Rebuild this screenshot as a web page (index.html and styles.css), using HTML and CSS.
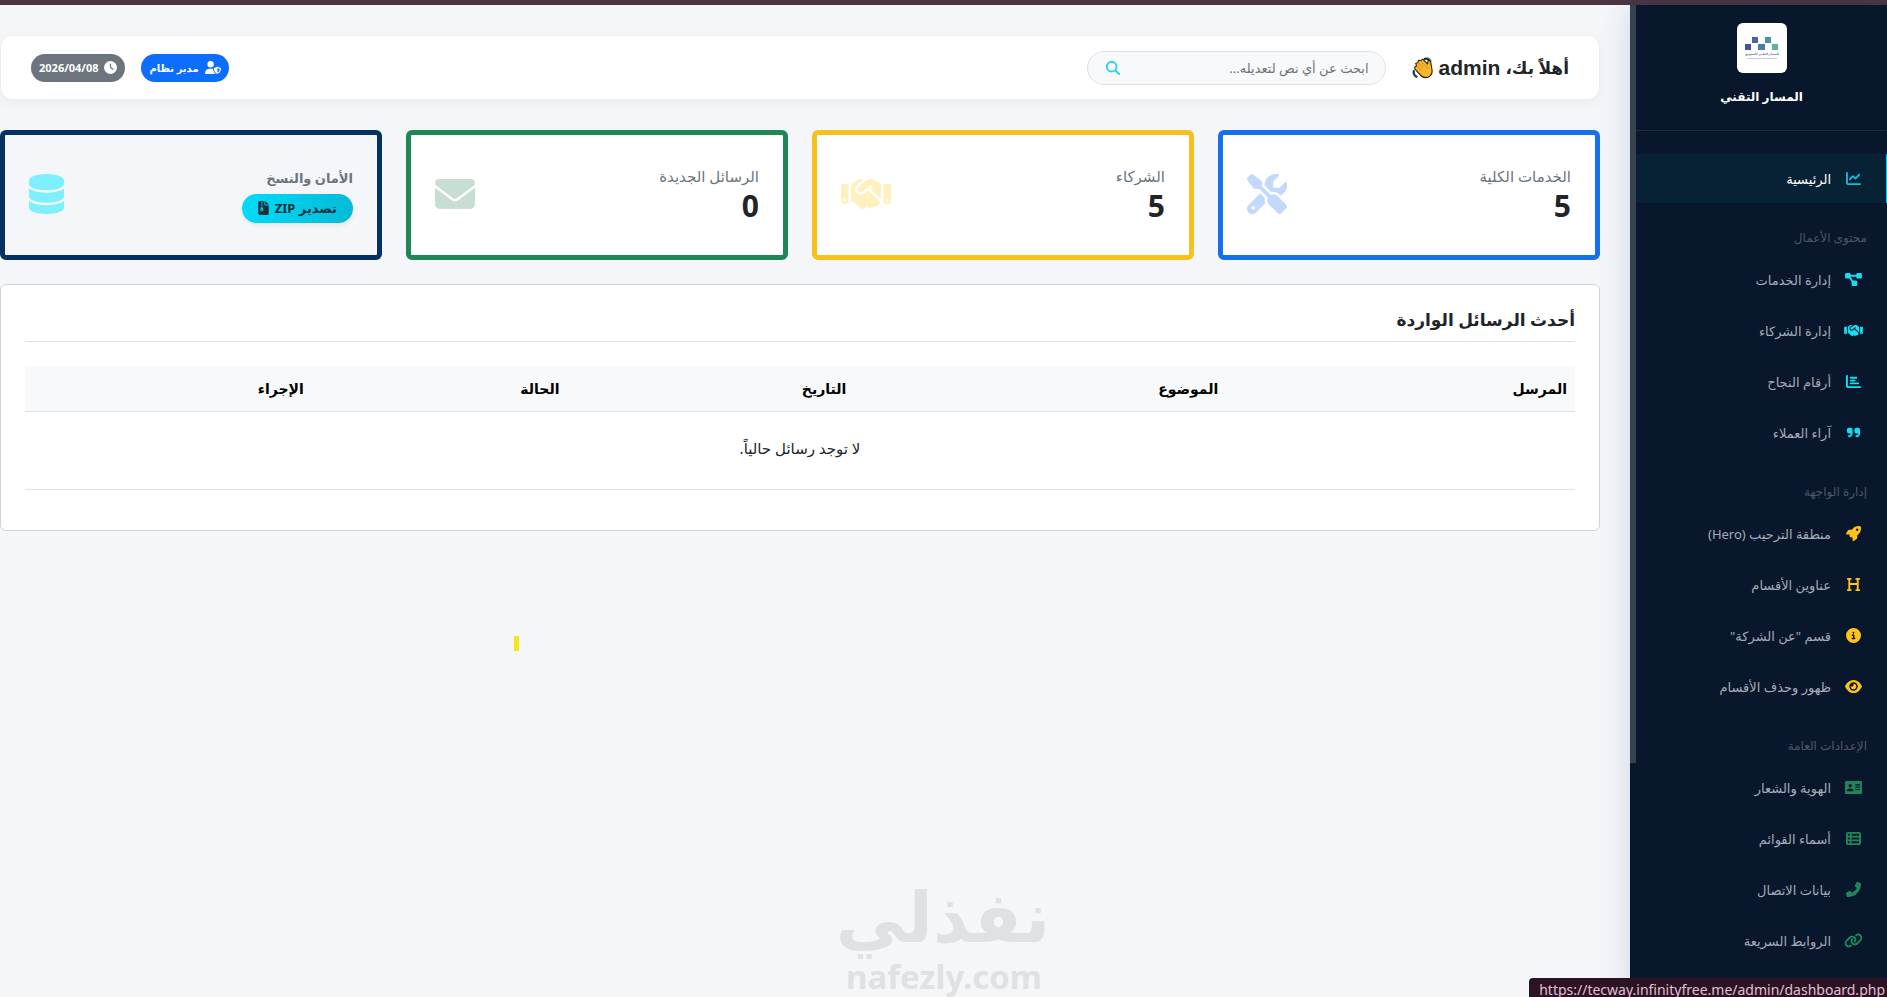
FILE: index.html
```html
<!DOCTYPE html>
<html lang="ar" dir="rtl">
<head>
  <meta charset="UTF-8">
  <meta name="viewport" content="width=device-width, initial-scale=1.0">
  <title>لوحة التحكم</title>
  <link rel="stylesheet" href="styles.css">
</head>
<body>
  <div class="top-strip"></div>

  <div class="layout">
    <aside class="sidebar">
      <div class="scroll-thumb"></div>

      <div class="brand">
        <div class="brand-logo">
          <svg viewBox="0 0 50 50">
            <rect x="8" y="21" width="6" height="6" fill="#4a4f9f"/>
            <rect x="15" y="14" width="6" height="6" fill="#4e62a6"/>
            <rect x="21" y="21" width="7" height="6" fill="#457fa8"/>
            <rect x="28" y="14" width="6" height="6" fill="#4795a5"/>
            <rect x="35" y="21" width="6" height="6" fill="#58b5a6"/>
            <text x="25" y="32" class="logo-text">المسار التقني للتسويق</text>
            <text x="25" y="36" class="logo-sub">Technical Track for Marketing</text>
          </svg>
        </div>
        <div class="brand-name">المسار التقني</div>
      </div>

      <nav class="nav">
        <a href="#" class="nav-link active">
          <svg class="icon" viewBox="0 0 512 512"><path d="M64 64c0-17.7-14.3-32-32-32S0 46.3 0 64V400c0 44.2 35.8 80 80 80H480c17.7 0 32-14.3 32-32s-14.3-32-32-32H80c-8.8 0-16-7.2-16-16V64zm406.6 86.6c12.5-12.5 12.5-32.8 0-45.3s-32.8-12.5-45.3 0L320 210.7l-57.4-57.4c-12.5-12.5-32.8-12.5-45.3 0l-112 112c-12.5 12.5-12.5 32.8 0 45.3s32.8 12.5 45.3 0L240 221.3l57.4 57.4c12.5 12.5 32.8 12.5 45.3 0l128-128z"/></svg>
          <span>الرئيسية</span>
        </a>

        <div class="nav-title">محتوى الأعمال</div>
        <a href="#" class="nav-link cyan">
          <svg class="icon" viewBox="0 0 576 512"><path d="M0 80C0 53.5 21.5 32 48 32h96c26.5 0 48 21.5 48 48V96H384V80c0-26.5 21.5-48 48-48h96c26.5 0 48 21.5 48 48v96c0 26.5-21.5 48-48 48H432c-26.5 0-48-21.5-48-48V160H192v16c0 1.7-.1 3.4-.3 5L272 288h96c26.5 0 48 21.5 48 48v96c0 26.5-21.5 48-48 48H272c-26.5 0-48-21.5-48-48V336c0-1.7 .1-3.4 .3-5L144 224H48c-26.5 0-48-21.5-48-48V80z"/></svg>
          <span>إدارة الخدمات</span>
        </a>
        <a href="#" class="nav-link cyan">
          <svg class="icon" viewBox="0 0 640 512"><path d="M323.4 85.2l-96.8 78.4c-16.1 13-19.2 36.4-7 53.1c12.9 17.8 38 21.3 55.3 7.8l99.3-77.2c7-5.4 17-4.2 22.5 2.8s4.2 17-2.8 22.5l-20.9 16.2L512 316.8V128h-.7l-3.9-2.5L434.8 79c-15.3-9.8-33.2-15-51.4-15c-21.8 0-43 7.5-60 21.2zm22.8 124.4l-51.7 40.2C263 274.3 217.3 268 193.7 235.6c-22.2-30.5-16.6-73.1 12.7-96.8l83.2-67.3c-11.6-4.9-24.1-7.4-36.8-7.4C234 64 215.7 69.6 200 80l-72 48V352h28.2l91.4 83.4c19.6 17.9 49.9 16.5 67.8-3.1c5.5-6.1 9.2-13.2 11.1-20.6l17 15.6c19.5 17.9 49.9 16.6 67.8-2.9c4.5-4.9 7.8-10.6 9.9-16.5c19.4 13 45.8 10.3 62.1-7.5c17.9-19.5 16.6-49.9-2.9-67.8l-134.2-123zM16 128c-8.8 0-16 7.2-16 16V352c0 17.7 14.3 32 32 32H64c17.7 0 32-14.3 32-32V128H16zM48 320a16 16 0 1 1 0 32 16 16 0 1 1 0-32zM544 128V352c0 17.7 14.3 32 32 32h32c17.7 0 32-14.3 32-32V144c0-8.8-7.2-16-16-16H544zm32 208a16 16 0 1 1 32 0 16 16 0 1 1 -32 0z"/></svg>
          <span>إدارة الشركاء</span>
        </a>
        <a href="#" class="nav-link cyan">
          <svg class="icon" viewBox="0 0 512 512"><path d="M32 32c17.7 0 32 14.3 32 32V400c0 8.8 7.2 16 16 16H480c17.7 0 32 14.3 32 32s-14.3 32-32 32H80c-44.2 0-80-35.8-80-80V64C0 46.3 14.3 32 32 32zm96 96c0-17.7 14.3-32 32-32l192 0c17.7 0 32 14.3 32 32s-14.3 32-32 32H160c-17.7 0-32-14.3-32-32zm32 64H288c17.7 0 32 14.3 32 32s-14.3 32-32 32H160c-17.7 0-32-14.3-32-32s14.3-32 32-32zm0 96H416c17.7 0 32 14.3 32 32s-14.3 32-32 32H160c-17.7 0-32-14.3-32-32s14.3-32 32-32z"/></svg>
          <span>أرقام النجاح</span>
        </a>
        <a href="#" class="nav-link cyan">
          <svg class="icon" viewBox="0 0 448 512"><path d="M448 296c0 66.3-53.7 120-120 120h-8c-17.7 0-32-14.3-32-32s14.3-32 32-32h8c30.9 0 56-25.1 56-56v-8H320c-35.3 0-64-28.7-64-64V160c0-35.3 28.7-64 64-64h64c35.3 0 64 28.7 64 64v32 32 72zm-256 0c0 66.3-53.7 120-120 120H64c-17.7 0-32-14.3-32-32s14.3-32 32-32h8c30.9 0 56-25.1 56-56v-8H64c-35.3 0-64-28.7-64-64V160c0-35.3 28.7-64 64-64h64c35.3 0 64 28.7 64 64v32 32 72z"/></svg>
          <span>آراء العملاء</span>
        </a>

        <div class="nav-title">إدارة الواجهة</div>
        <a href="#" class="nav-link yellow">
          <svg class="icon" viewBox="0 0 512 512"><path d="M156.6 384.9L125.7 354c-8.5-8.5-11.5-20.8-7.7-32.2c3-8.9 7-20.5 11.8-33.8L24 288c-8.6 0-16.6-4.6-20.9-12.1s-4.2-16.7 .2-24.1l52.5-88.5c13-21.9 36.5-35.3 61.9-35.3l82.3 0c2.4-4 4.8-7.7 7.2-11.3C289.1-4.1 411.1-8.1 483.9 5.3c11.6 2.1 20.6 11.2 22.8 22.8c13.4 72.9 9.3 194.8-111.4 276.7c-3.5 2.4-7.3 4.8-11.3 7.2v82.3c0 25.4-13.4 49-35.3 61.9l-88.5 52.5c-7.4 4.4-16.6 4.5-24.1 .2s-12.1-12.2-12.1-20.9V380.8c-14.1 4.9-26.4 8.9-35.7 11.9c-11.2 3.6-23.4 .5-31.8-7.8zM384 168a40 40 0 1 0 0-80 40 40 0 1 0 0 80z"/></svg>
          <span>منطقة الترحيب (Hero)</span>
        </a>
        <a href="#" class="nav-link yellow">
          <svg class="icon" viewBox="0 0 448 512"><path d="M0 64C0 46.3 14.3 32 32 32H80h48c17.7 0 32 14.3 32 32s-14.3 32-32 32H112V208H336V96H320c-17.7 0-32-14.3-32-32s14.3-32 32-32h48 48c17.7 0 32 14.3 32 32s-14.3 32-32 32H400V240 416h16c17.7 0 32 14.3 32 32s-14.3 32-32 32H368 320c-17.7 0-32-14.3-32-32s14.3-32 32-32h16V272H112V416h16c17.7 0 32 14.3 32 32s-14.3 32-32 32H80 32c-17.7 0-32-14.3-32-32s14.3-32 32-32H48V240 96H32C14.3 96 0 81.7 0 64z"/></svg>
          <span>عناوين الأقسام</span>
        </a>
        <a href="#" class="nav-link yellow">
          <svg class="icon" viewBox="0 0 512 512"><path d="M256 512A256 256 0 1 0 256 0a256 256 0 1 0 0 512zM216 336h24V272H216c-13.3 0-24-10.7-24-24s10.7-24 24-24h48c13.3 0 24 10.7 24 24v88h8c13.3 0 24 10.7 24 24s-10.7 24-24 24H216c-13.3 0-24-10.7-24-24s10.7-24 24-24zm40-208a32 32 0 1 1 0 64 32 32 0 1 1 0-64z"/></svg>
          <span>قسم "عن الشركة"</span>
        </a>
        <a href="#" class="nav-link yellow">
          <svg class="icon" viewBox="0 0 576 512"><path d="M288 32c-80.8 0-145.5 36.8-192.6 80.6C48.6 156 17.3 208 2.5 243.7c-3.3 7.9-3.3 16.7 0 24.6C17.3 304 48.6 356 95.4 399.4C142.5 443.2 207.2 480 288 480s145.5-36.8 192.6-80.6c46.8-43.5 78.1-95.4 93-131.1c3.3-7.9 3.3-16.7 0-24.6c-14.9-35.7-46.2-87.7-93-131.1C433.5 68.8 368.8 32 288 32zM144 256a144 144 0 1 1 288 0 144 144 0 1 1 -288 0zm144-64c0 35.3-28.7 64-64 64c-7.1 0-13.9-1.2-20.3-3.3c-5.5-1.8-11.9 1.6-11.7 7.4c.3 6.9 1.3 13.8 3.2 20.7c13.7 51.2 66.4 81.6 117.6 67.9s81.6-66.4 67.9-117.6c-11.1-41.5-47.8-69.4-88.6-71.1c-5.8-.2-9.2 6.1-7.4 11.7c2.1 6.4 3.3 13.2 3.3 20.3z"/></svg>
          <span>ظهور وحذف الأقسام</span>
        </a>

        <div class="nav-title">الإعدادات العامة</div>
        <a href="#" class="nav-link green">
          <svg class="icon" viewBox="0 0 576 512"><path fill-rule="evenodd" d="M0 64a32 32 0 0 1 32-32H544a32 32 0 0 1 32 32V448a32 32 0 0 1-32 32H32a32 32 0 0 1-32-32zM120 192a56 56 0 1 0 112 0 56 56 0 1 0-112 0zM64 368c0-48 36-80 80-80h64c44 0 80 32 80 80v16H64zM352 144H512v40H352zM352 224H512v40H352zM352 304H512v40H352z"/></svg>
          <span>الهوية والشعار</span>
        </a>
        <a href="#" class="nav-link green">
          <svg class="icon" viewBox="0 0 512 512"><path fill-rule="evenodd" d="M0 96C0 60.7 28.7 32 64 32H448c35.3 0 64 28.7 64 64V416c0 35.3-28.7 64-64 64H64c-35.3 0-64-28.7-64-64V96zm64 0v64h64V96H64zm384 0H192v64H448V96zM64 224v64h64V224H64zm384 0H192v64H448V224zM64 352v64h64V352H64zm384 0H192v64H448V352z"/></svg>
          <span>أسماء القوائم</span>
        </a>
        <a href="#" class="nav-link green">
          <svg class="icon" viewBox="0 0 512 512"><path transform="matrix(-1 0 0 1 512 0)" d="M164.9 24.6c-7.7-18.6-28-28.5-47.4-23.2l-88 24C12.1 30.2 0 46 0 64C0 311.4 200.6 512 448 512c18 0 33.8-12.1 38.6-29.5l24-88c5.3-19.4-4.6-39.7-23.2-47.4l-96-40c-16.3-6.8-35.2-2.1-46.3 11.6L304.7 368C234.3 334.7 177.3 277.7 144 207.3L193.3 167c13.7-11.2 18.4-30 11.6-46.3l-40-96z"/></svg>
          <span>بيانات الاتصال</span>
        </a>
        <a href="#" class="nav-link green">
          <svg class="icon" viewBox="0 0 640 512"><path d="M579.8 267.7c56.5-56.5 56.5-148 0-204.5c-50-50-128.8-56.5-186.3-15.4l-1.6 1.1c-14.4 10.3-17.7 30.3-7.4 44.6s30.3 17.7 44.6 7.4l1.6-1.1c32.1-22.9 76-19.3 103.8 8.6c31.5 31.5 31.5 82.5 0 114L422.3 334.8c-31.5 31.5-82.5 31.5-114 0c-27.9-27.9-31.5-71.8-8.6-103.8l1.1-1.6c10.3-14.4 6.9-34.4-7.4-44.6s-34.4-6.9-44.6 7.4l-1.1 1.6C206.5 251.2 213 330 263 380c56.5 56.5 148 56.5 204.5 0L579.8 267.7zM60.2 244.3c-56.5 56.5-56.5 148 0 204.5c50 50 128.8 56.5 186.3 15.4l1.6-1.1c14.4-10.3 17.7-30.3 7.4-44.6s-30.3-17.7-44.6-7.4l-1.6 1.1c-32.1 22.9-76 19.3-103.8-8.6C74 372 74 321 105.5 289.5L217.7 177.2c31.5-31.5 82.5-31.5 114 0c27.9 27.9 31.5 71.8 8.6 103.9l-1.1 1.6c-10.3 14.4-6.9 34.4 7.4 44.6s34.4 6.9 44.6-7.4l1.1-1.6C433.5 260.8 427 182 377 132c-56.5-56.5-148-56.5-204.5 0L60.2 244.3z"/></svg>
          <span>الروابط السريعة</span>
        </a>
      </nav>
    </aside>

    <main class="main">
      <header class="topbar">
        <div class="topbar-start">
          <h1 class="welcome">أهلاً بك، <span class="user">admin</span>
            <svg class="wave" viewBox="0 0 24 24">
              <g fill="none" stroke="#16343c" stroke-width="2.4" stroke-linecap="round">
                <path d="M14 2c2.500-.6 4.500.7 5.300 2.600M2 15.500c-.5 2.500.8 5 3 6"/>
                <path d="M16.500 1c2.200 0 4 1.500 4.300 3.500M1.300 18c.3 2.300 1.700 4 3.700 4.500" stroke="#3a7f8e" stroke-width="1"/>
              </g>
              <path d="M3 11l2-1.500-1-2.500 2.500-1L7 3.500l2.500.3L12 2.500l5 5 .5-3.500c1.500-.8 3 .2 3 2l1.500 9c.3 4-3 7.500-7 7.500-3 0-5-1.500-6.500-3.500L3 13z" fill="#f6b52a" stroke="#2a2112" stroke-width="1.200" stroke-linejoin="round"/>
              <path d="M6.500 6l6 6M9.500 4l5.500 6M5 9.500l5.500 5.500M16.500 8c-.5 2-.5 3.500.5 5" fill="none" stroke="#cf8a20" stroke-width="1"/>
            </svg>
          </h1>
          <label class="search">
            <input type="text" placeholder="ابحث عن أي نص لتعديله..." aria-label="بحث">
            <svg viewBox="0 0 512 512"><path d="M416 208c0 45.900-14.900 88.300-40 122.700L502.600 457.400c12.500 12.500 12.500 32.800 0 45.300s-32.800 12.500-45.300 0L330.700 376c-34.400 25.200-76.800 40-122.700 40C93.100 416 0 322.900 0 208S93.100 0 208 0S416 93.100 416 208zM208 352a144 144 0 1 0 0-288 144 144 0 1 0 0 288z"/></svg>
          </label>
        </div>
        <div class="badges">
          <span class="badge badge-blue">
            <svg class="wide" viewBox="0 0 640 512"><path fill-rule="evenodd" d="M224 256A128 128 0 1 0 224 0a128 128 0 1 0 0 256zm-45.700 48C79.800 304 0 383.800 0 482.300C0 498.700 13.300 512 29.700 512H418.300c1.800 0 3.500-.2 5.300-.5c-76.300-55.100-99.800-141-103.100-200.200c-16.100-4.800-33.100-7.300-50.700-7.300H178.300zm308.800-78.300l-120 48C358 277.400 352 286.200 352 296c0 63.300 25.900 168.800 134.800 214.200c5.900 2.500 12.600 2.500 18.500 0C614.100 464.800 640 359.300 640 296c0-9.800-6-18.600-15.100-22.300l-120-48c-5.700-2.300-12.100-2.300-17.800 0zM591.400 312c-3.900 50.700-27.200 116.700-95.400 149.700V273.800L591.400 312z"/></svg>
            مدير نظام
          </span>
          <span class="badge badge-gray">
            <svg viewBox="0 0 512 512"><path d="M256 0a256 256 0 1 1 0 512A256 256 0 1 1 256 0zM232 120V256c0 8 4 15.500 10.700 20l96 64c11 7.400 25.900 4.400 33.300-6.700s4.400-25.900-6.700-33.300L280 243.200V120c0-13.300-10.700-24-24-24s-24 10.700-24 24z"/></svg>
            2026/04/08
          </span>
        </div>
      </header>

      <section class="stats">
        <div class="stat stat-blue">
          <div>
            <div class="stat-label">الخدمات الكلية</div>
            <div class="stat-value">5</div>
          </div>
          <svg class="stat-icon" viewBox="0 0 512 512"><path d="M78.600 5C69.100-2.400 55.600-1.500 47 7L7 47c-8.500 8.500-9.400 22-2.100 31.600l80 104c4.500 5.900 11.600 9.400 19 9.400h54.100l109 109c-14.700 29-10 65.400 14.300 89.600l112 112c12.500 12.500 32.800 12.500 45.300 0l64-64c12.500-12.500 12.500-32.800 0-45.300l-112-112c-24.200-24.200-60.600-29-89.600-14.300l-109-109V104c0-7.500-3.500-14.500-9.400-19L78.600 5zM19.900 396.100C7.200 408.800 0 426.100 0 444.100C0 481.600 30.400 512 67.900 512c18 0 35.300-7.200 48-19.900L233.700 374.300c-7.800-20.900-9-43.600-3.600-65.100l-61.700-61.700L19.900 396.100zM512 144c0-10.500-1.100-20.700-3.200-30.500c-2.400-11.200-16.100-14.100-24.200-6l-63.900 63.900c-3 3-7.100 4.700-11.300 4.700H352c-8.800 0-16-7.200-16-16V102.600c0-4.200 1.700-8.300 4.700-11.300l63.900-63.900c8.100-8.100 5.200-21.800-6-24.200C388.700 1.100 378.500 0 368 0C288.500 0 224 64.500 224 144l0 .8 85.300 85.300c36-9.100 75.800 .5 104 28.700L429 274.500c49-23 83-72.800 83-130.500zM56 432a24 24 0 1 1 48 0 24 24 0 1 1 -48 0z"/></svg>
        </div>
        <div class="stat stat-yellow">
          <div>
            <div class="stat-label">الشركاء</div>
            <div class="stat-value">5</div>
          </div>
          <svg class="stat-icon" viewBox="0 0 640 512"><path d="M323.400 85.200l-96.800 78.400c-16.100 13-19.200 36.400-7 53.100c12.900 17.800 38 21.300 55.300 7.800l99.300-77.200c7-5.400 17-4.200 22.500 2.800s4.200 17-2.800 22.500l-20.900 16.200L512 316.800V128h-.7l-3.900-2.500L434.800 79c-15.300-9.800-33.200-15-51.400-15c-21.800 0-43 7.500-60 21.200zm22.800 124.400l-51.700 40.200C263 274.300 217.300 268 193.700 235.600c-22.200-30.500-16.600-73.100 12.700-96.800l83.200-67.300c-11.600-4.900-24.100-7.400-36.800-7.400C234 64 215.700 69.600 200 80l-72 48V352h28.200l91.400 83.400c19.600 17.900 49.900 16.500 67.800-3.100c5.500-6.100 9.200-13.200 11.100-20.600l17 15.600c19.500 17.900 49.900 16.600 67.800-2.900c4.500-4.900 7.800-10.600 9.900-16.500c19.400 13 45.800 10.300 62.100-7.500c17.900-19.500 16.600-49.900-2.900-67.800l-134.200-123zM16 128c-8.800 0-16 7.200-16 16V352c0 17.700 14.300 32 32 32H64c17.700 0 32-14.300 32-32V128H16zM48 320a16 16 0 1 1 0 32 16 16 0 1 1 0-32zM544 128V352c0 17.700 14.300 32 32 32h32c17.700 0 32-14.300 32-32V144c0-8.800-7.200-16-16-16H544zm32 208a16 16 0 1 1 32 0 16 16 0 1 1 -32 0z"/></svg>
        </div>
        <div class="stat stat-green">
          <div>
            <div class="stat-label">الرسائل الجديدة</div>
            <div class="stat-value">0</div>
          </div>
          <svg class="stat-icon" viewBox="0 0 512 512"><path d="M48 64C21.500 64 0 85.500 0 112c0 15.100 7.100 29.300 19.200 38.400L236.800 313.600c11.400 8.500 27 8.500 38.400 0L492.800 150.400c12.100-9.100 19.200-23.300 19.200-38.400c0-26.500-21.500-48-48-48H48zM0 176V384c0 35.300 28.700 64 64 64H448c35.300 0 64-28.700 64-64V176L294.400 339.200c-22.800 17.100-54 17.100-76.800 0L0 176z"/></svg>
        </div>
        <div class="stat stat-navy">
          <div>
            <div class="backup-label">الأمان والنسخ</div>
            <button type="button" class="zip-btn">
              تصدير ZIP
              <svg viewBox="0 0 384 512"><path fill-rule="evenodd" d="M64 0C28.700 0 0 28.700 0 64V448c0 35.300 28.700 64 64 64H320c35.300 0 64-28.700 64-64V160H256c-17.700 0-32-14.300-32-32V0H64zM256 0V128H384L256 0zM96 32h64v32H96zM96 96h64v32H96zM96 160h64v32H96zM96 224h64l24 96c8 34-18 64-56 64s-64-30-56-64zM104 312h48v32h-48z"/></svg>
            </button>
          </div>
          <svg class="stat-icon" viewBox="0 0 448 512"><path d="M448 80v48c0 44.200-100.300 80-224 80S0 172.200 0 128V80C0 35.800 100.300 0 224 0S448 35.800 448 80zM393.200 214.700c20.800-7.400 39.900-16.900 54.800-28.600V288c0 44.200-100.300 80-224 80S0 332.200 0 288V186.100c14.900 11.800 34 21.200 54.800 28.600C99.700 230.700 159.500 240 224 240s124.300-9.300 169.200-25.300zM0 346.100c14.900 11.800 34 21.200 54.800 28.600C99.700 390.700 159.500 400 224 400s124.300-9.300 169.200-25.300c20.800-7.400 39.900-16.900 54.800-28.600V432c0 44.200-100.300 80-224 80S0 476.200 0 432V346.100z"/></svg>
        </div>
      </section>

      <section class="panel">
        <h2 class="panel-title">أحدث الرسائل الواردة</h2>
        <table class="messages">
          <thead>
            <tr>
              <th class="col-sender">المرسل</th>
              <th class="col-subject">الموضوع</th>
              <th class="col-date">التاريخ</th>
              <th class="col-status">الحالة</th>
              <th>الإجراء</th>
            </tr>
          </thead>
          <tbody>
            <tr>
              <td colspan="5">لا توجد رسائل حالياً.</td>
            </tr>
          </tbody>
        </table>
      </section>
    </main>
  </div>

  <div class="marker"></div>
  <div class="watermark">
    <div class="watermark-ar">نفذلي</div>
    <div class="watermark-en">nafezly.com</div>
  </div>
  <div class="status" dir="ltr">https://tecway.infinityfree.me/admin/dashboard.php</div>
</body>
</html>
```
FILE: styles.css
```css
* {
  box-sizing: border-box;
}

body {
  margin: 0;
  height: 100vh;
  display: flex;
  flex-direction: column;
  overflow: hidden;
  background: #f4f6fa;
  color: #212529;
  font-family: "Noto Sans", "DejaVu Sans", sans-serif;
  font-size: 14px;
}

.top-strip {
  flex: none;
  height: 5px;
  background: #4b3641;
}

.layout {
  flex: 1;
  display: flex;
  gap: 30px;
  min-height: 0;
}

/* sidebar */
.sidebar {
  position: relative;
  flex: none;
  width: 257px;
  padding-left: 6px;
  background: #08172b;
  box-shadow: 0 0 30px rgba(0, 40, 90, 0.15);
  overflow: hidden;
}

.scroll-thumb {
  position: absolute;
  top: 0;
  left: 0;
  width: 6px;
  height: 758px;
  background: #36434e;
}

.brand {
  display: flex;
  flex-direction: column;
  align-items: center;
  gap: 12px;
  height: 126px;
  padding-top: 18px;
  border-bottom: 1px solid #1f2c3e;
}

.brand-logo {
  width: 50px;
  height: 50px;
  background: #fff;
  border-radius: 6px;
}

.brand-logo svg {
  display: block;
}

.logo-text,
.logo-sub {
  text-anchor: middle;
  font-size: 3px;
  font-weight: bold;
  fill: #5966a0;
}

.logo-sub {
  font-size: 2px;
  fill: #8890a0;
}

.brand-name {
  color: #fff;
  font-size: 12px;
  font-weight: bold;
  line-height: 24px;
}

.nav {
  padding-top: 23px;
}

.nav-link {
  display: flex;
  align-items: center;
  gap: 10px;
  height: 49px;
  margin-bottom: 2px;
  padding: 0 20px;
  border-right: 1px solid transparent;
  color: #a3acb8;
  font-size: 13px;
  text-decoration: none;
}

.nav-link .icon {
  width: 25px;
  height: 15px;
  fill: currentColor;
}

.nav-link.active {
  background: #082235;
  border-right-color: #00c8e8;
  color: #fff;
}

.nav-link.active .icon {
  fill: #17b6dc;
}

.nav-link.cyan .icon {
  fill: #12dff2;
}

.nav-link.yellow .icon {
  fill: #ffc11a;
}

.nav-link.green .icon {
  fill: #1d8757;
}

.nav-title {
  height: 50px;
  padding: 23px 20px 0 0;
  color: #4c5868;
  font-size: 12px;
  line-height: 20px;
}

/* main area */
.main {
  flex: 1;
  min-width: 0;
  padding-top: 30px;
}

.topbar {
  display: flex;
  align-items: center;
  justify-content: space-between;
  height: 65px;
  padding: 0 30px;
  margin-bottom: 30px;
  background: #fff;
  border: 1px solid #eceef1;
  border-radius: 12px;
  box-shadow: 0 4px 12px rgba(0, 0, 0, 0.04);
}

.topbar-start,
.badges {
  display: flex;
  align-items: center;
}

.topbar-start {
  gap: 26px;
}

.badges {
  gap: 16px;
}

.welcome {
  display: flex;
  align-items: center;
  gap: 5px;
  margin: 0;
  font-size: 17px;
  font-weight: bold;
}

.welcome .user {
  font-family: "Liberation Sans", sans-serif;
  font-size: 21px;
}

.wave {
  width: 22px;
  height: 24px;
}

.search {
  display: flex;
  align-items: center;
  width: 299px;
  height: 34px;
  padding: 0 16px 0 18px;
  background: #f8f9fa;
  border: 1px solid #dee2e6;
  border-radius: 17px;
}

.search input {
  flex: 1;
  min-width: 0;
  padding: 0;
  border: 0;
  outline: 0;
  background: none;
  font: inherit;
  font-size: 13px;
}

.search input::placeholder {
  color: #6c757d;
}

.search svg {
  width: 14px;
  height: 14px;
  fill: #1cd3e4;
}

.badge {
  display: flex;
  align-items: center;
  gap: 6px;
  height: 28px;
  padding: 0 8px;
  border-radius: 14px;
  color: #fff;
  font-size: 11px;
  font-weight: bold;
}

.badge svg {
  width: 13px;
  height: 13px;
  fill: #fff;
}

.badge svg.wide {
  width: 16px;
}

.badge-blue {
  background: #0d6efd;
  font-size: 10px;
}

.badge-gray {
  background: #6c757d;
}

/* stat cards */
.stats {
  display: grid;
  grid-template-columns: repeat(4, 1fr);
  gap: 24px;
  margin-bottom: 24px;
}

.stat {
  display: flex;
  align-items: center;
  justify-content: space-between;
  min-height: 130px;
  padding: 24px 24px 27px;
  background: #fff;
  border: 5px solid;
  border-radius: 6px;
}

.stat-blue {
  border-color: #156fee;
}

.stat-yellow {
  border-color: #f6c11c;
}

.stat-green {
  border-color: #1e8756;
}

.stat-navy {
  border-color: #033260;
  background: #f4f6fa;
}

.stat-label {
  color: #6c757d;
  font-size: 15px;
  line-height: 24px;
}

.stat-value {
  font-size: 30px;
  font-weight: bold;
  line-height: 36px;
}

.stat-icon {
  height: 40px;
  fill: currentColor;
}

.stat-blue .stat-icon {
  color: #c2d9fc;
}

.stat-yellow .stat-icon {
  color: #fff0c0;
}

.stat-green .stat-icon {
  color: #c7dfd3;
}

.stat-navy .stat-icon {
  color: #7df0fc;
}

.backup-label {
  color: #6c757d;
  font-size: 13px;
  font-weight: bold;
  line-height: 20px;
  margin: 3px 0 6px;
}

.zip-btn {
  display: flex;
  align-items: center;
  gap: 6px;
  height: 29px;
  padding: 0 16px;
  border: 0;
  border-radius: 15px;
  background: linear-gradient(to right, #02dbf7, #04bad8);
  color: #173039;
  font-family: inherit;
  font-size: 13px;
  font-weight: bold;
  box-shadow: 0 2px 4px rgba(0, 0, 0, 0.08);
}

.zip-btn svg {
  width: 11px;
  height: 14px;
  fill: #173039;
}

/* messages */
.panel {
  padding: 23px 24px 40px;
  background: #fff;
  border: 1px solid #cfd2d6;
  border-radius: 6px;
}

.panel-title {
  height: 34px;
  margin: 0 0 24px;
  border-bottom: 1px solid #dee2e6;
  font-size: 17px;
  font-weight: bold;
  line-height: 24px;
}

.messages {
  width: 100%;
  table-layout: fixed;
  border-collapse: collapse;
}

.messages th {
  height: 45px;
  padding: 0 8px;
  background: #f8f9fa;
  border-bottom: 1px solid #dee2e6;
  color: #000;
  font-size: 14px;
  text-align: right;
}

.messages td {
  height: 78px;
  padding: 0 8px 4px;
  border-bottom: 1px solid #dee2e6;
  font-size: 15px;
  text-align: center;
}

.col-sender {
  width: 22.5%;
}

.col-subject {
  width: 24%;
}

.col-date {
  width: 18.5%;
}

.col-status {
  width: 16.5%;
}

/* things floating over the page */
.marker {
  position: absolute;
  top: 636px;
  left: 514px;
  width: 5px;
  height: 15px;
  background: #f5e616;
}

.watermark {
  position: absolute;
  left: 838px;
  bottom: 0;
  width: 212px;
  color: #dfe1e3;
  font-weight: bold;
  text-align: center;
  white-space: nowrap;
}

.watermark-ar {
  font-size: 70px;
  line-height: 84px;
}

.watermark-en {
  font-size: 33px;
  line-height: 40px;
}

.status {
  position: absolute;
  right: 0;
  bottom: 0;
  height: 19px;
  padding: 2px 2px 0 10px;
  background: #2c1323;
  border-radius: 4px 0 0 0;
  color: #e2bfd6;
  font-size: 14px;
  line-height: 20px;
  white-space: nowrap;
  overflow: hidden;
}
```
